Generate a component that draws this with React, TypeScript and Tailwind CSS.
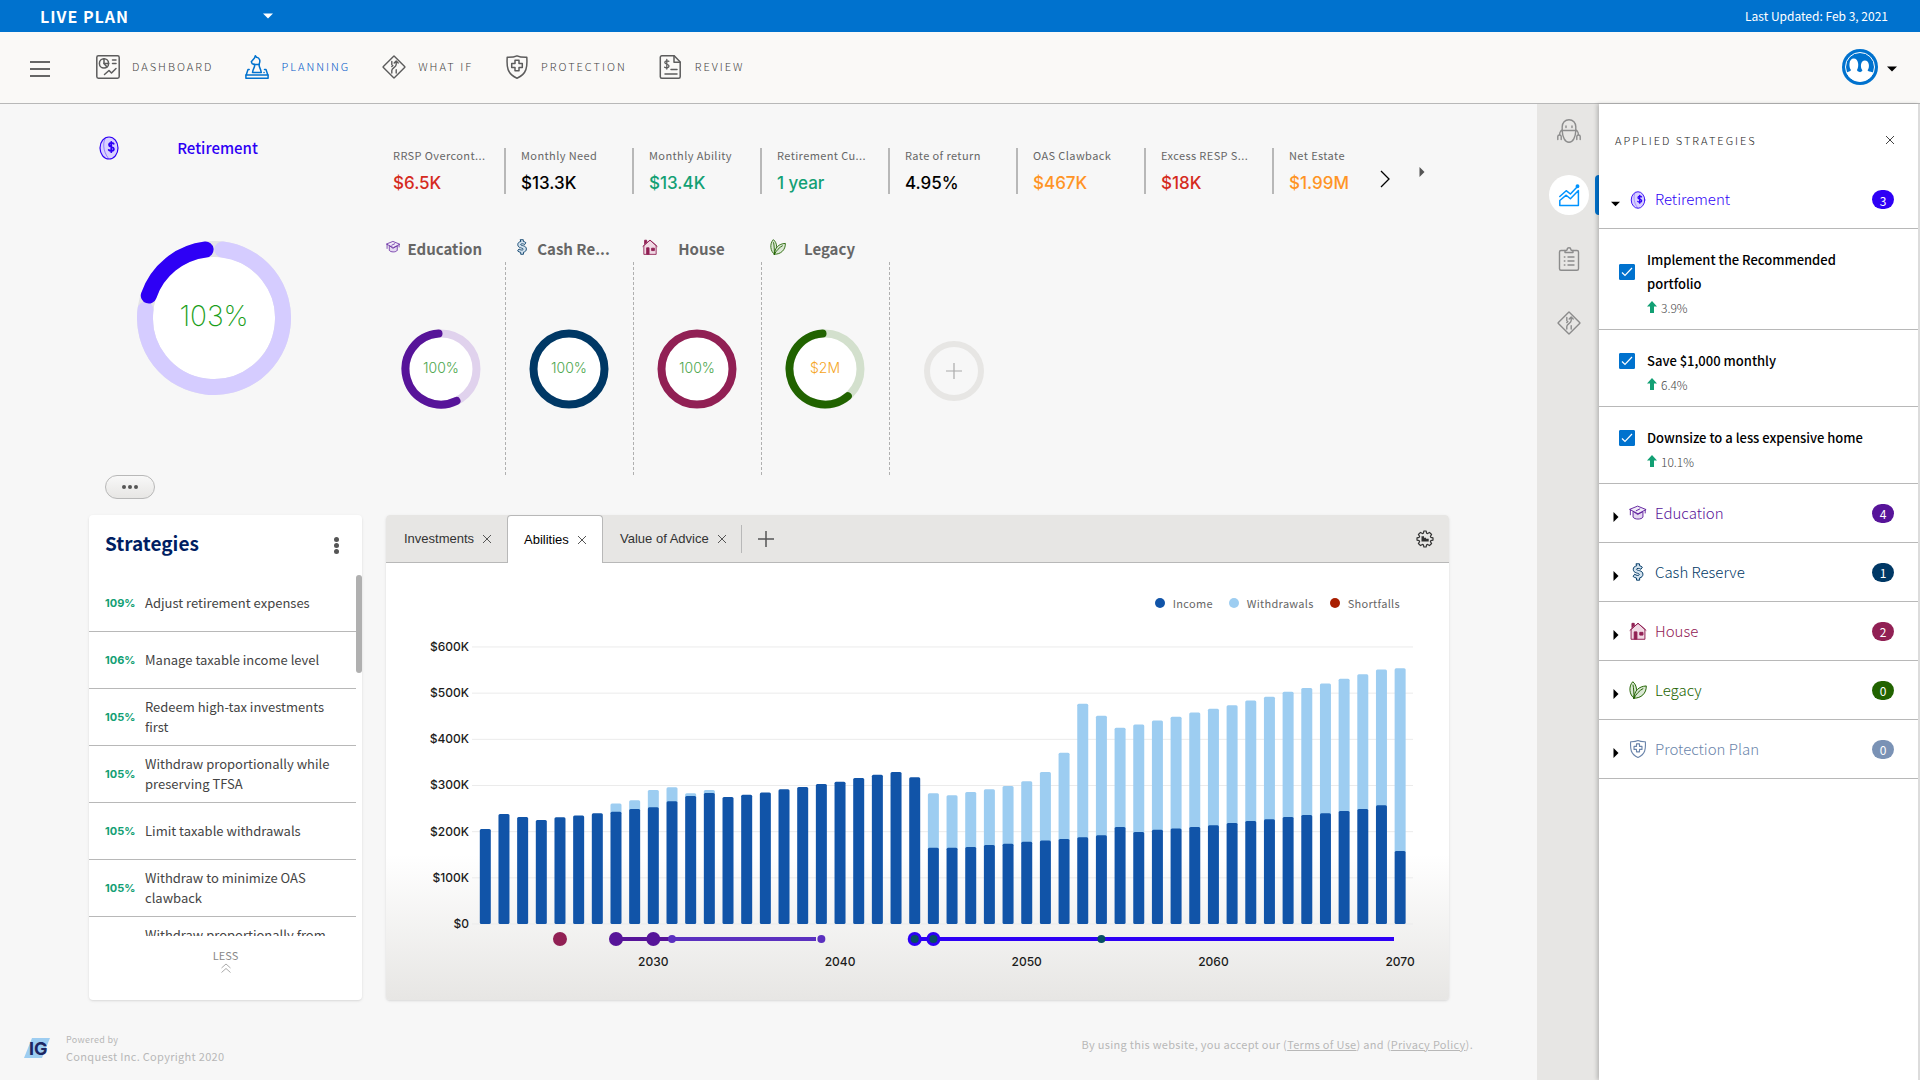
import React, { useState } from 'react';

const goalColors = {
  retirement: '#2e00f5',
  education: '#571499',
  cash: '#003865',
  house: '#912054',
  legacy: '#216300',
};

type IconProps = { className?: string; color?: string };

/* ---------- Icons ---------- */

const DashboardIcon = ({ className }: IconProps) => (
  <svg viewBox="0 0 24 24" className={className} fill="none" stroke="currentColor" strokeWidth="1.5" strokeLinecap="round" strokeLinejoin="round">
    <rect x="0.8" y="0.8" width="22.4" height="22.4" rx="1.6" />
    <path d="M8 3.8a4.6 4.6 0 1 0 4.6 4.6H8z" />
    <path d="M8 3.8a4.6 4.6 0 0 1 4.6 4.6M8 8.4l3 3.6M16.5 5h3.5M16.5 8.500h3.5" />
    <path d="M8.500 19.500l4.500-4 2.500 2.500 4.500-4.500" />
  </svg>
);

const PlanningIcon = ({ className }: IconProps) => (
  <svg viewBox="0 0 24 24" className={className} fill="none" stroke="currentColor" strokeWidth="1.5" strokeLinecap="round" strokeLinejoin="round">
    <path d="M7.500 17.500c.3-3.500 2.300-4.500 2.300-8L7.200 8.800 6.300 6.800 9.500 3l.8-2.200 1.200 1.500c3.300.5 4.200 3.400 2.500 7.200.2 3.500 1.900 4.500 2.300 8z" />
    <path d="M8.800 9.500h5.500M4.200 14.500H3L1.200 20h21.600L21 14.500h-1.500M19 17.500h.1" />
    <path d="M.9 20v3.200h22.200V20" />
  </svg>
);

const SignIcon = ({ className }: IconProps) => (
  <svg viewBox="0 0 24 24" className={className} fill="none" stroke="currentColor" strokeWidth="1.400" strokeLinecap="round" strokeLinejoin="round">
    <rect x="4.100" y="4.100" width="15.800" height="15.800" rx="0.8" transform="rotate(45 12 12)" />
    <path d="M9.800 18v-2.600c0-2.600 4.400-3 4.400-5.800V6.200M12.200 8l2-2 2 2M9.800 6.500v3M14.200 18v-3.200M9.800 11.500l1-1" />
  </svg>
);

const ShieldIcon = ({ className }: IconProps) => (
  <svg viewBox="0 0 24 24" className={className} fill="none" stroke="currentColor" strokeWidth="1.500" strokeLinejoin="round">
    <path d="M12 .8c2.600 1.300 5.800 1.600 9.800 1.500.6 9.200.2 16.700-9.800 20.900C2 19 1.600 11.500 2.200 2.300 6.200 2.400 9.400 2.100 12 .8z" />
    <path d="M10 5.200h4v3.300h3.300v4H14v3.300h-4v-3.300H6.700v-4H10z" />
  </svg>
);

const ReviewIcon = ({ className }: IconProps) => (
  <svg viewBox="0 0 24 24" className={className} fill="none" stroke="currentColor" strokeWidth="1.500" strokeLinecap="round" strokeLinejoin="round">
    <path d="M2.800.8h12.400l6 6.200v14.700a1.500 1.500 0 0 1-1.500 1.500H2.800a1.500 1.500 0 0 1-1.500-1.500V2.300A1.500 1.500 0 0 1 2.800.8z" />
    <path d="M15 1v6.200h6M12 14.500h6M6 19h12" />
    <path d="M9.800 6.300C9 5.500 5.800 5.500 5.800 7.500c0 2.200 4.200 1.300 4.200 3.600 0 2-3.200 2.100-4.400 1.100M7.800 4.500v9.500" strokeWidth="1.300" />
  </svg>
);

const RobotIcon = ({ className }: IconProps) => (
  <svg viewBox="0 0 24 24" className={className} fill="none" stroke="currentColor" strokeWidth="1.400" strokeLinecap="round" strokeLinejoin="round">
    <path d="M5.200 11.500V7.800C5.200 3.800 8 .7 12 .7s6.800 3.100 6.800 7.100v3.700M4.200 11.500h15.600" />
    <path d="M5.200 11.500c.2 6.500 2.800 11.800 6.800 11.800s6.600-5.300 6.800-11.800" />
    <path d="M9 7v1.500M15 7v1.500M4.500 11.500c-1.500 1-2 2.500-2 4.500M19.500 11.500c1.500 1 2 2.500 2 4.500M.8 20.500v-3c0-2 3.400-2 3.400 0v3M19.800 20.500v-3c0-2 3.400-2 3.400 0v3" />
  </svg>
);

const TrendIcon = ({ className }: IconProps) => (
  <svg viewBox="0 0 24 24" className={className} fill="none" stroke="currentColor" strokeWidth="1.500" strokeLinecap="round" strokeLinejoin="round">
    <path d="M2.800 22.500v-5l6.400-5.300 4.200 3.600 8-8.300v15z" />
    <path d="M2.800 13.500l6.400-5.800 4.200 3.300 7.600-8" />
    <circle cx="20.500" cy="3.300" r="1.200" fill="currentColor" />
  </svg>
);

const ClipboardIcon = ({ className }: IconProps) => (
  <svg viewBox="0 0 24 24" className={className} fill="none" stroke="currentColor" strokeWidth="1.400" strokeLinecap="round" strokeLinejoin="round">
    <path d="M8 3.500H4a1.500 1.500 0 0 0-1.500 1.500v16.800a1.500 1.500 0 0 0 1.500 1.500h16a1.500 1.500 0 0 0 1.500-1.500V5A1.500 1.500 0 0 0 20 3.500h-4" />
    <path d="M8 5.500v-2c1.500 0 2.200-.5 2.200-1.300 0-2 3.600-2 3.600 0 0 .8.700 1.300 2.200 1.300v2zM11 10h6M11 14h6M11 18h6M7.300 10h.6M7.300 14h.6M7.300 18h.6" />
  </svg>
);

const CoinIcon = ({ className, color = goalColors.retirement }: IconProps) => (
  <svg viewBox="0 0 20 24" className={className} fill="none" stroke={color} strokeLinecap="round">
    <ellipse cx="10" cy="12" rx="9" ry="11" strokeWidth="1.200" fill="#d9d1ff" />
    <path d="M7 1.500C3.500 5 3.500 15 9.500 22.500" strokeWidth="1" opacity=".4" />
    <path d="M14.700 7.800c-1-1.300-4.700-1.200-4.700 1.100 0 2.400 4.900 1.500 4.900 4 0 2.300-3.900 2.500-5.200 1M12.300 5.800v10.400" strokeWidth="1.800" />
  </svg>
);

const CapIcon = ({ className, color = goalColors.education }: IconProps) => (
  <svg viewBox="0 0 20 18" className={className} fill="none" stroke={color} strokeWidth="1" strokeLinejoin="round" strokeLinecap="round">
    <path d="M4.500 7.500v6c1.500 3 9.500 3 11 0v-6L10 10.500z" fill="#e5d9f1" />
    <path d="M10 1.500l9 3.700-9 4.600-9-4.600z" fill="#f1eaf8" />
    <path d="M12 4.500l-4 2M1.500 5.500v5.500M18 6v3" />
  </svg>
);

const DollarIcon = ({ className, color = goalColors.cash }: IconProps) => (
  <svg viewBox="0 0 16 22" className={className} strokeLinecap="round" strokeLinejoin="round">
    <path
      d="M6 1h3.800v2.300c1.500.3 2.700.9 3.500 1.800l-1.700 2.600C10 6.500 6.200 6 6.200 7.700c0 1.800 7.800.8 7.800 6 0 2.500-1.500 4-4 4.500V21H6.200v-2.600C4.500 18.200 3 17.400 2 16.400l1.900-2.700c1.800 1.700 5.700 2 5.700.3C9.600 12 2.200 13 2.200 7.700 2.200 5.500 3.600 4 6 3.500z"
      fill="#d3e2ee" stroke={color} strokeWidth="1.200"
    />
  </svg>
);

const HouseIcon = ({ className, color = goalColors.house }: IconProps) => (
  <svg viewBox="0 0 20 20" className={className} fill="none" stroke={color} strokeWidth="1.100" strokeLinejoin="round">
    <path d="M2.300 8.200L10 1.500l7.700 6.700v11H2.300z" fill="#f0d9e4" />
    <path d="M.8 9.500L10 1.300l9.200 8.200" />
    <path d="M3.300 6.500V1.500h2.500v3" fill={color} />
    <rect x="5.800" y="11" width="3" height="8" fill={color} />
    <rect x="12" y="11.500" width="3.500" height="3" fill={color} />
  </svg>
);

const LeafIcon = ({ className, color = goalColors.legacy }: IconProps) => (
  <svg viewBox="0 0 20 20" className={className} fill="none" stroke={color} strokeWidth="1.100" strokeLinejoin="round" strokeLinecap="round">
    <path d="M5.500 19C.3 15.500-.8 6 4.200.8 9 4.500 10 13 5.500 19z" fill="#dbe8d5" />
    <path d="M5.500 19c.5-8 5-13 13.700-13.500C19.500 13.500 13.500 19.500 5.500 19z" fill="#dbe8d5" />
    <path d="M4.500 4.500c.8 4 1 9 1 14.500M15.500 8.500c-4 2-7.500 6-10 10.500" />
  </svg>
);

const CloseIcon = ({ className }: IconProps) => (
  <svg viewBox="0 0 10 10" className={className} fill="none" stroke="currentColor" strokeWidth="1">
    <path d="M1 1l8 8M9 1l-8 8" />
  </svg>
);

const CaretDown = ({ className }: IconProps) => (
  <svg viewBox="0 0 10 6" className={className} fill="currentColor"><path d="M0 .5h10L5 5.500z" /></svg>
);

const CaretRight = ({ className }: IconProps) => (
  <svg viewBox="0 0 6 10" className={className} fill="currentColor"><path d="M.5 0v10l5-5z" /></svg>
);

const GearIcon = ({ className }: IconProps) => (
  <svg viewBox="0 0 18 18" className={className} fill="none" stroke="currentColor" strokeWidth="1.200" strokeLinejoin="round">
    <path d="M7.400 3.200L7.900 1h2.200l.5 2.200 1 .4L13.500 2.400 15.600 4.500 14.400 6.400l.4 1L17 7.900v2.200l-2.200.5-.4 1 1.200 1.900-2.100 2.100-1.900-1.200-1 .4-.5 2.200H7.900l-.5-2.200-1-.4-1.900 1.200-2.100-2.100 1.200-1.900-.4-1L1 10.100V7.900l2.200-.5.4-1L2.400 4.500 4.500 2.400l1.900 1.200z" />
    <path d="M5.500 6.300h2.500v1.500h2v1h2.700v2.700H5.500z" fill="currentColor" stroke="none" />
  </svg>
);

/* ---------- Data ---------- */

const navItems = [
  { label: 'DASHBOARD', Icon: DashboardIcon },
  { label: 'PLANNING', Icon: PlanningIcon, active: true },
  { label: 'WHAT IF', Icon: SignIcon },
  { label: 'PROTECTION', Icon: ShieldIcon },
  { label: 'REVIEW', Icon: ReviewIcon },
];

const kpis = [
  { label: 'RRSP Overcont...', value: '$6.5K', color: 'text-[#d52b1e]' },
  { label: 'Monthly Need', value: '$13.3K', color: 'text-black' },
  { label: 'Monthly Ability', value: '$13.4K', color: 'text-[#12a074]' },
  { label: 'Retirement Cu...', value: '1 year', color: 'text-[#12a074]' },
  { label: 'Rate of return', value: '4.95%', color: 'text-black' },
  { label: 'OAS Clawback', value: '$467K', color: 'text-[#ff9425]' },
  { label: 'Excess RESP S...', value: '$18K', color: 'text-[#d52b1e]' },
  { label: 'Net Estate', value: '$1.99M', color: 'text-[#ff9425]' },
];

const goals = [
  { label: 'Education', Icon: CapIcon, color: goalColors.education, track: '#e0d2ed', from: 154, to: 356, text: '100%', textColor: 'text-[#4ca64c]' },
  { label: 'Cash Re...', Icon: DollarIcon, color: goalColors.cash, track: goalColors.cash, from: 0, to: 0, text: '100%', textColor: 'text-[#4ca64c]' },
  { label: 'House', Icon: HouseIcon, color: goalColors.house, track: goalColors.house, from: 0, to: 0, text: '100%', textColor: 'text-[#4ca64c]' },
  { label: 'Legacy', Icon: LeafIcon, color: goalColors.legacy, track: '#d3e0cd', from: 140, to: 356, text: '$2M', textColor: 'text-[#f5a623]' },
];

const strategies = [
  { pct: '109%', label: 'Adjust retirement expenses' },
  { pct: '106%', label: 'Manage taxable income level' },
  { pct: '105%', label: 'Redeem high-tax investments first' },
  { pct: '105%', label: 'Withdraw proportionally while preserving TFSA' },
  { pct: '105%', label: 'Limit taxable withdrawals' },
  { pct: '105%', label: 'Withdraw to minimize OAS clawback' },
];

const applied = [
  { label: 'Implement the Recommended portfolio', pct: '3.9%' },
  { label: 'Save $1,000 monthly', pct: '6.4%' },
  { label: 'Downsize to a less expensive home', pct: '10.1%' },
];

const groups = [
  { label: 'Education', count: 4, Icon: CapIcon, color: 'text-[#571499]', bg: 'bg-[#571499]' },
  { label: 'Cash Reserve', count: 1, Icon: DollarIcon, color: 'text-[#003865]', bg: 'bg-[#003865]' },
  { label: 'House', count: 2, Icon: HouseIcon, color: 'text-[#912054]', bg: 'bg-[#912054]' },
  { label: 'Legacy', count: 0, Icon: LeafIcon, color: 'text-[#216300]', bg: 'bg-[#216300]' },
  { label: 'Protection Plan', count: 0, Icon: ShieldIcon, color: 'text-[#6a84aa]', bg: 'bg-[#7a92b5]' },
];

// thousands of dollars per year, 2021 to 2070
const income = [
  206, 238, 232, 225, 231, 235, 240, 243, 249, 253, 266, 277, 284, 275, 280, 285, 292, 297, 303, 308, 316, 323, 329, 318,
  165, 165, 167, 171, 174, 178, 181, 184, 188, 192, 210, 199, 204, 207, 210, 214, 219, 223, 227, 232, 236, 240, 245, 249, 257, 158,
];

const totals: Record<number, number> = {
  2028: 261, 2029: 268, 2030: 290, 2031: 296, 2032: 283, 2033: 290,
  2045: 283, 2046: 279, 2047: 286, 2048: 292, 2049: 299, 2050: 309, 2051: 329, 2052: 371, 2053: 477, 2054: 451,
  2055: 425, 2056: 432, 2057: 441, 2058: 449, 2059: 458, 2060: 466, 2061: 474, 2062: 484, 2063: 492, 2064: 503,
  2065: 511, 2066: 521, 2067: 531, 2068: 541, 2069: 551, 2070: 554,
};

/* ---------- Charts ---------- */

const point = (c: number, r: number, deg: number) => {
  const a = ((deg - 90) * Math.PI) / 180;
  return `${c + r * Math.cos(a)} ${c + r * Math.sin(a)}`;
};

const arc = (c: number, r: number, from: number, to: number) =>
  `M${point(c, r, from)}A${r} ${r} 0 ${to - from > 180 ? 1 : 0} 1 ${point(c, r, to)}`;

const xOf = (year: number) => 99.3 + (year - 2021) * 18.67;
const yOf = (k: number) => 313 - k * 0.4617;

const AbilitiesChart: React.FC = () => (
  <svg viewBox="0 0 1063 389" className="block w-full" role="img" aria-label="Abilities by year">
    {[0, 100, 200, 300, 400, 500, 600].map((k) => (
      <g key={k}>
        <line x1="86" x2="1027" y1={yOf(k)} y2={yOf(k)} stroke="#ebebeb" />
        <text x="83" y={yOf(k) + 4} textAnchor="end" className="fill-[#1c1c1c] text-[12px] font-medium">
          {k === 0 ? '$0' : `$${k}K`}
        </text>
      </g>
    ))}
    {income.map((k, i) => {
      const year = 2021 + i;
      const total = totals[year];
      return (
        <g key={year}>
          {total && <rect x={xOf(year) - 5.5} y={yOf(total)} width="11" height={(total - k) * 0.4617 + 2} rx="1.5" fill="#9dcdf1" />}
          <rect x={xOf(year) - 5.5} y={yOf(k)} width="11" height={k * 0.4617} rx="1.5" fill="#1154a8" />
        </g>
      );
    })}

    {/* Goal timeline */}
    <circle cx={xOf(2025)} cy="328" r="7" fill="#912054" />
    <line x1={xOf(2028)} x2={xOf(2031)} y1="328" y2="328" stroke="#571499" strokeWidth="4" />
    <line x1={xOf(2031)} x2="430" y1="328" y2="328" stroke="#5b30bf" strokeWidth="4" />
    <circle cx={xOf(2028)} cy="328" r="7" fill="#571499" />
    <circle cx={xOf(2030)} cy="328" r="7" fill="#571499" />
    <circle cx={xOf(2031)} cy="328" r="4" fill="#5b30bf" />
    <circle cx={xOf(2039)} cy="328" r="4" fill="#5b30bf" />
    <line x1={xOf(2044)} x2="1008" y1="328" y2="328" stroke="#2e00f5" strokeWidth="4" />
    <circle cx={xOf(2044)} cy="328" r="7" fill="#2e00f5" />
    <circle cx={xOf(2045)} cy="328" r="7" fill="#2e00f5" />
    {[2044, 2045, 2054].map((year) => (
      <circle key={year} cx={xOf(year)} cy="328" r="4" fill="#064e63" />
    ))}

    {[2030, 2040, 2050, 2060, 2070].map((year) => (
      <text key={year} x={xOf(year)} y="355" textAnchor="middle" className="fill-[#1c1c1c] text-[12px] font-medium">
        {year}
      </text>
    ))}
  </svg>
);

const GoalRing = ({ goal }: { goal: (typeof goals)[number] }) => (
  <div className="grid place-items-center">
    <svg viewBox="0 0 80 80" className="col-start-1 row-start-1 size-20">
      <circle cx="40" cy="40" r="35.500" fill="#fff" stroke={goal.track} strokeWidth="8" />
      {goal.to > 0 && <path d={arc(40, 35.5, goal.from, goal.to)} fill="none" stroke={goal.color} strokeWidth="8" strokeLinecap="round" />}
    </svg>
    <span className={`col-start-1 row-start-1 mb-[2px] font-['Inter','Liberation_Sans',sans-serif] text-[14px] font-light ${goal.textColor}`}>{goal.text}</span>
  </div>
);

const Badge = ({ count, bg }: { count: number; bg: string }) => (
  <span className={`ml-auto flex h-[19px] w-[22px] items-center justify-center rounded-full pt-[2px] text-[12px] leading-none text-white ${bg}`}>{count}</span>
);

/* ---------- Page ---------- */

const App: React.FC = () => {
  const [checked, setChecked] = useState([true, true, true]);

  const toggle = (i: number) => setChecked(checked.map((c, j) => (i === j ? !c : c)));

  return (
    <div className="flex min-h-screen flex-col bg-[#f7f7f7] font-['Noto_Sans_CJK_SC','Open_Sans',sans-serif] text-[#666]">
      {/* Plan bar */}
      <div className="flex h-8 items-center justify-between bg-[#0072ce] pr-8 pb-px pl-10 text-white">
        <button className="flex w-[233px] items-center justify-between text-[16px] font-bold tracking-[1px]">
          LIVE PLAN
          <CaretDown className="h-[6px] w-[10px]" />
        </button>
        <span className="text-[12px]">Last Updated: Feb 3, 2021</span>
      </div>

      {/* Navigation */}
      <header className="flex h-[72px] items-center border-b border-[#b8b8b8] bg-[#faf9f7] pr-[23px] pb-[2px] pl-[30px]">
        <button aria-label="Menu" className="mt-1 flex w-5 flex-col gap-[5px]">
          <span className="h-[2px] bg-[#666]" />
          <span className="h-[2px] bg-[#666]" />
          <span className="h-[2px] bg-[#666]" />
        </button>
        <nav className="ml-[46px] flex gap-8">
          {navItems.map(({ label, Icon, active }) => (
            <a key={label} href="#" className={`flex items-center gap-3 text-[11px] font-light tracking-[2px] ${active ? 'text-[#0058c8]' : 'text-[#444]'}`}>
              <Icon className={active ? 'size-6 text-[#0072ce]' : 'size-6 text-[#5c5c5c]'} />
              {label}
            </a>
          ))}
        </nav>
        <button aria-label="Account" className="ml-auto flex items-center gap-[9px] text-black">
          <svg viewBox="0 0 36 36" className="size-9">
            <circle cx="18" cy="18" r="18" fill="#0072ce" />
            <circle cx="18" cy="18" r="14.500" fill="none" stroke="#fff" strokeWidth="1" />
            <path d="M4.500 23.500c1.500-1 4-1 4.500-2.500-2.500-3-2.300-11.500 2.700-11.500s5.600 8 3.300 11.500c.3 1.500 1.800 1.500 3.100 2.200 1-.7 2-.8 2.300-2-2.500-3-1.800-9.700 2.500-9.700s5.200 6.700 2.700 9.700c.4 1.500 3.500 1.400 5.900 2.300C27 35.500 9 35.500 4.500 23.500z" fill="#fff" />
          </svg>
          <CaretDown className="mt-1 h-[6px] w-[10px]" />
        </button>
      </header>

      <div className="flex flex-1">
        {/* Main column */}
        <div className="flex min-w-0 flex-1 flex-col">
          <main className="grid grid-cols-[273px_minmax(0,1fr)] gap-x-6 gap-y-4 pt-8 pr-[88px] pl-[89px]">
            {/* Retirement goal */}
            <section className="flex flex-col items-start">
              <div className="flex w-full items-center pr-[46px] pl-[10px]">
                <CoinIcon className="h-6 w-5" />
                <h2 className="flex-1 text-center text-[15px] leading-6 font-medium text-[#2e00f5]">Retirement</h2>
              </div>
              <div className="mt-[81px] ml-12 grid place-items-center">
                <svg viewBox="0 0 154 154" className="col-start-1 row-start-1 size-[154px]">
                  <circle cx="77" cy="77" r="69" fill="#fff" stroke="#e4e4e6" strokeWidth="16" />
                  <path d={arc(77, 69, 7, 277)} fill="none" stroke="#d5ccff" strokeWidth="16" strokeLinecap="round" />
                  <path d={arc(77, 69, 289, 353)} fill="none" stroke="#2e00f5" strokeWidth="16" strokeLinecap="round" />
                </svg>
                <span className="col-start-1 row-start-1 mb-1 font-['Inter','Liberation_Sans',sans-serif] text-[28px] leading-8 font-extralight text-[#1a9e1a]">103%</span>
              </div>
              <button aria-label="More" className="mt-20 ml-4 flex h-6 w-[50px] items-center justify-center gap-[2px] rounded-full border border-[#b8b8b8] bg-linear-to-b from-[#f8f8f8] to-[#e7e6e4]">
                <span className="size-1 rounded-full bg-[#555]" />
                <span className="size-1 rounded-full bg-[#555]" />
                <span className="size-1 rounded-full bg-[#555]" />
              </button>
            </section>

            {/* Key figures and goals */}
            <section className="-ml-2 pt-3">
              <div className="flex">
                {kpis.map((kpi, i) => (
                  <div key={kpi.label} className={`h-[46px] pl-[15px] whitespace-nowrap ${i < kpis.length - 1 ? 'w-32 border-r-2 border-[#b8b8b8]' : 'w-[106px]'}`}>
                    <div className="text-[11px] leading-[15px] tracking-[0.4px]">{kpi.label}</div>
                    <div className={`mt-2 font-['Inter','Liberation_Sans',sans-serif] text-[17px] leading-6 font-medium ${kpi.color}`}>{kpi.value}</div>
                  </div>
                ))}
                <button aria-label="Next figures" className="mt-[22px] h-[18px] text-black">
                  <svg viewBox="0 0 10 18" className="h-[18px] w-[10px]" fill="none" stroke="currentColor" strokeWidth="1.300"><path d="M1 1l8 8-8 8" /></svg>
                </button>
                <button aria-label="Expand" className="mt-[19px] ml-[29px] h-[10px] text-[#555]">
                  <CaretRight className="h-[10px] w-[6px]" />
                </button>
              </div>

              <div className="mt-[43px] flex">
                {goals.map((goal) => (
                  <div key={goal.label} className="w-32">
                    <div className="flex items-center gap-[7px] pr-6 pl-2">
                      <goal.Icon className="mb-1 h-4 w-4" color={goal.color} />
                      <h3 className="flex-1 text-center text-[15px] leading-6 font-bold whitespace-nowrap text-[#666]">{goal.label}</h3>
                    </div>
                    <div className="mt-px flex h-[213px] items-center justify-center border-r border-dashed border-[#b0b0b0] pr-px">
                      <GoalRing goal={goal} />
                    </div>
                  </div>
                ))}
                <button aria-label="Add goal" className="mt-[104px] ml-[34px] flex size-[60px] items-center justify-center rounded-full border-[6px] border-[#e7e6e4] text-[#aaa]">
                  <svg viewBox="0 0 16 16" className="size-4" fill="none" stroke="currentColor" strokeWidth="1.200"><path d="M8 0v16M0 8h16" /></svg>
                </button>
              </div>
            </section>

            {/* Strategies */}
            <section className="flex flex-col rounded bg-white shadow-sm">
              <div className="flex items-center justify-between pt-[10px] pr-[23px] pl-4">
                <h2 className="text-[19px] leading-9 font-bold text-[#001e62]">Strategies</h2>
                <button aria-label="Strategy options" className="mt-1 flex flex-col gap-[1px]">
                  <span className="size-[5px] rounded-full bg-[#555]" />
                  <span className="size-[5px] rounded-full bg-[#555]" />
                  <span className="size-[5px] rounded-full bg-[#555]" />
                </button>
              </div>
              <div className="mt-[14px] flex h-[361px]">
                <ul className="flex-1 overflow-hidden">
                  {strategies.map((s) => (
                    <li key={s.label} className="flex h-[57px] items-center border-b border-[#b8b8b8] pr-4 pl-4">
                      <span className="w-10 shrink-0 font-['Inter','Liberation_Sans',sans-serif] text-[11px] font-bold text-[#12a074]">{s.pct}</span>
                      <span className="text-[13px] leading-5 text-[#444]">{s.label}</span>
                    </li>
                  ))}
                  <li className="pt-2 pl-14 text-[13px] leading-5 text-[#444]">Withdraw proportionally from</li>
                </ul>
                <div className="h-[98px] w-[6px] rounded-full bg-[#b0b0b0]" />
              </div>
              <button className="mt-[11px] flex flex-col items-center text-[11px] leading-4 text-[#888]">
                LESS
                <svg viewBox="0 0 10 10" className="size-[10px]" fill="none" stroke="#aaa" strokeWidth="1"><path d="M.5 5L5 1l4.500 4M.5 9.500L5 5.500l4.500 4" /></svg>
              </button>
            </section>

            {/* Chart card */}
            <section className="overflow-hidden rounded bg-linear-to-b from-white from-70% to-[#e7e6e4] shadow-sm">
              <div className="flex h-12 items-stretch bg-[#e7e6e4] font-['Liberation_Sans',Arial,sans-serif] text-[13px] text-[#333]">
                <div className="flex w-[121px] items-center gap-2 border-b border-[#b8b8b8] pl-[18px]">
                  <button>Investments</button>
                  <button aria-label="Close Investments" className="text-[#555]"><CloseIcon className="size-[10px]" /></button>
                </div>
                <div className="flex w-[96px] items-center gap-2 rounded-t border-x border-t border-[#b8b8b8] bg-white pl-4 text-black">
                  <button>Abilities</button>
                  <button aria-label="Close Abilities" className="text-[#555]"><CloseIcon className="size-[10px]" /></button>
                </div>
                <div className="flex flex-1 items-center border-b border-[#b8b8b8] pr-[15px]">
                  <div className="flex h-7 items-center gap-2 border-r border-[#b8b8b8] pr-[14px] pl-[17px]">
                    <button>Value of Advice</button>
                    <button aria-label="Close Value of Advice" className="text-[#555]"><CloseIcon className="size-[10px]" /></button>
                  </div>
                  <button aria-label="Add tab" className="ml-4">
                    <svg viewBox="0 0 16 16" className="size-4" fill="none" stroke="#555" strokeWidth="1.500"><path d="M8 0v16M0 8h16" /></svg>
                  </button>
                  <button aria-label="Chart settings" className="ml-auto"><GearIcon className="size-[18px]" /></button>
                </div>
              </div>
              <ul className="flex justify-end gap-4 pt-8 pr-[49px] text-[11px] leading-4 tracking-[0.3px]">
                <li className="flex items-center gap-2"><span className="size-[10px] rounded-full bg-[#1154a8]" />Income</li>
                <li className="flex items-center gap-2"><span className="size-[10px] rounded-full bg-[#9dcdf1]" />Withdrawals</li>
                <li className="flex items-center gap-2"><span className="size-[10px] rounded-full bg-[#a81e00]" />Shortfalls</li>
              </ul>
              <div className="font-['Inter','Liberation_Sans',sans-serif]">
                <AbilitiesChart />
              </div>
            </section>
          </main>

          <footer className="mt-auto flex items-center pr-[64px] pb-4 pl-6 text-[#b8b8b8]">
            <svg viewBox="0 0 26 20" className="h-5 w-[26px]" aria-label="IG">
              <path d="M8 0h18l-8 20H0z" fill="#9dcdf1" />
              <text x="5" y="16.500" className="fill-[#1d2663] font-['Inter','Liberation_Sans',sans-serif] text-[18px] font-bold">IG</text>
            </svg>
            <div className="ml-4">
              <p className="text-[9px] leading-4 tracking-[0.3px]">Powered by</p>
              <p className="text-[11px] leading-4 tracking-[0.3px]">Conquest Inc. Copyright 2020</p>
            </div>
            <p className="mb-2 ml-auto text-[11px] leading-4 tracking-[0.3px]">
              By using this website, you accept our (<a href="#" className="underline">Terms of Use</a>) and (<a href="#" className="underline">Privacy Policy</a>).
            </p>
          </footer>
        </div>

        {/* Icon rail */}
        <aside className="flex w-[62px] flex-col items-center bg-[#e7e6e4] pt-[7px] pl-[2px] text-[#8c8c8c]">
          <button aria-label="Assistant" className="flex h-10 items-center"><RobotIcon className="size-6" /></button>
          <div className="my-6 flex w-full items-center justify-end gap-[6px]">
            <button aria-label="Applied strategies" className="flex size-10 items-center justify-center rounded-full bg-white text-[#0093ff]"><TrendIcon className="size-6" /></button>
            <span className="h-10 w-1 rounded-l-sm bg-[#0072ce]" />
          </div>
          <button aria-label="Checklist" className="flex h-10 items-center"><ClipboardIcon className="size-6" /></button>
          <button aria-label="Scenarios" className="mt-6 flex h-10 items-center"><SignIcon className="size-6" /></button>
        </aside>

        {/* Applied strategies */}
        <aside className="z-10 w-[321px] border-r-2 border-[#dcdcdc] bg-white shadow-[-2px_0_4px_rgba(0,0,0,0.2)]">
          <div className="flex h-[72px] items-center justify-between pr-[23px] pl-4">
            <h2 className="text-[11px] font-light tracking-[2px] text-[#222]">APPLIED STRATEGIES</h2>
            <button aria-label="Close" className="text-[#444]"><CloseIcon className="size-[10px]" /></button>
          </div>
          <div className="flex h-[53px] items-center border-b border-[#b8b8b8] pr-6 pb-[5px] pl-3">
            <CaretDown className="mt-2 h-[6px] w-[9px] text-black" />
            <CoinIcon className="ml-[9px] h-[18px] w-[18px]" />
            <h3 className="ml-2 text-[15px] font-light text-[#2e00f5]">Retirement</h3>
            <Badge count={3} bg="bg-[#2e00f5]" />
          </div>
          {applied.map((item, i) => (
            <div key={item.label} className="border-b border-[#b8b8b8] pt-[19px] pr-12 pb-[9px] pl-5">
              <label className="flex items-center gap-3 text-[13px] leading-6 font-medium text-black">
                <span className="grid size-4 shrink-0">
                  <input type="checkbox" checked={checked[i]} onChange={() => toggle(i)} className="peer col-start-1 row-start-1 size-4 appearance-none rounded-[1px] border border-[#0072ce] checked:bg-[#0072ce]" />
                  <svg viewBox="0 0 16 16" className="pointer-events-none invisible col-start-1 row-start-1 size-4 peer-checked:visible" fill="none" stroke="#fff" strokeWidth="1.200"><path d="M3 8.500l3 3 7-7.500" /></svg>
                </span>
                {item.label}
              </label>
              <div className="flex items-center gap-1 pl-7 text-[12px] leading-6 font-light text-[#444]">
                <svg viewBox="0 0 10 12" className="mb-[3px] h-3 w-[10px]" fill="#12a074"><path d="M5 0l5 5.500H7V12H3V5.500H0z" /></svg>
                {item.pct}
              </div>
            </div>
          ))}
          {groups.map(({ label, count, Icon, color, bg }) => (
            <div key={label} className="flex h-[59px] items-center border-b border-[#b8b8b8] pr-6 pl-[14px]">
              <CaretRight className="mt-2 h-[10px] w-[6px] text-black" />
              <span className={`ml-[10px] ${color}`}><Icon className="h-[18px] w-[18px]" /></span>
              <h3 className={`ml-2 text-[15px] font-light ${color}`}>{label}</h3>
              <Badge count={count} bg={bg} />
            </div>
          ))}
        </aside>
      </div>
    </div>
  );
};

export default App;
